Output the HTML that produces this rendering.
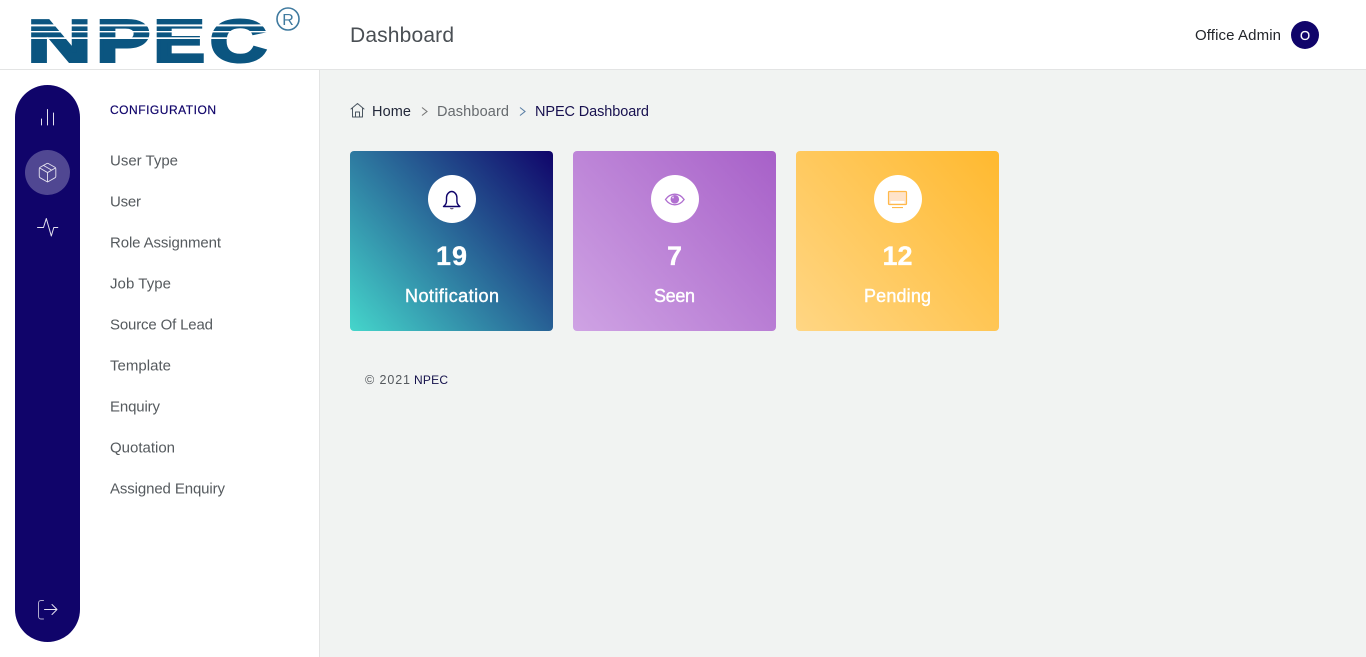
<!DOCTYPE html>
<html lang="en"><head><meta charset="utf-8"><title>NPEC Dashboard</title>
<style>
html,body{margin:0;padding:0;width:1366px;height:657px;overflow:hidden;background:#f1f3f2}
svg{display:block;position:absolute;left:0;top:0}
text{font-family:"Liberation Sans",Arial,sans-serif}
.m{font-size:15px;fill:#555a5e}
.c{font-weight:bold;font-size:27px;fill:#fff;text-anchor:middle;stroke:#fff;stroke-width:.3}
.l{font-size:18px;fill:#fff;stroke:#fff;stroke-width:.4}
.i{fill:none;stroke:#e4e1ef;stroke-width:1;stroke-linecap:round;stroke-linejoin:round}
.g{font-size:59px;font-weight:bold;fill:#0b5580;stroke:#0b5580;stroke-width:3}
</style></head><body>
<svg width="1366" height="657" viewBox="0 0 1366 657" xmlns="http://www.w3.org/2000/svg">
<defs>
<linearGradient id="g1" gradientUnits="userSpaceOnUse" x1="350" y1="331" x2="553" y2="151"><stop offset="0" stop-color="#45d6cb"/><stop offset="1" stop-color="#10046a"/></linearGradient>
<linearGradient id="g2" gradientUnits="userSpaceOnUse" x1="573" y1="331" x2="776" y2="151"><stop offset="0" stop-color="#cfa3e4"/><stop offset="1" stop-color="#a760c8"/></linearGradient>
<linearGradient id="g3" gradientUnits="userSpaceOnUse" x1="796" y1="331" x2="999" y2="151"><stop offset="0" stop-color="#ffd684"/><stop offset="1" stop-color="#ffb92f"/></linearGradient>
</defs>
<!-- panels -->
<rect width="1366" height="657" fill="#f1f3f2"/>
<rect x="0" y="0" width="1366" height="69" fill="#fff"/>
<rect x="0" y="69" width="1366" height="1" fill="#e3e4e4"/>
<rect x="0" y="70" width="319" height="587" fill="#fff"/>
<rect x="319" y="70" width="1" height="587" fill="#e3e4e4"/>
<!-- logo -->
<text class="g" x="27.500" y="61.500" textLength="63.700" lengthAdjust="spacingAndGlyphs">N</text>
<text class="g" x="96.400" y="61.500" textLength="53.700" lengthAdjust="spacingAndGlyphs">P</text>
<text class="g" x="153.500" y="61.500" textLength="51.300" lengthAdjust="spacingAndGlyphs">E</text>
<text class="g" x="210" y="61.500" textLength="56.700" lengthAdjust="spacingAndGlyphs">C</text>
<rect x="28" y="24.400" width="245" height="2" fill="#fff"/>
<rect x="28" y="31" width="245" height="1.400" fill="#fff"/>
<rect x="28" y="37.300" width="245" height="1.700" fill="#fff"/>
<circle cx="288" cy="19" r="11" fill="none" stroke="#3f7a9f" stroke-width="1.600"/>
<text x="288" y="25" font-size="16" fill="#3f7a9f" text-anchor="middle">R</text>
<!-- header -->
<text x="350" y="42" font-size="21" fill="#4a4f54" textLength="104">Dashboard</text>
<text x="1195" y="40" font-size="15" fill="#23262b" textLength="86">Office Admin</text>
<circle cx="1305" cy="35" r="14" fill="#10046a"/>
<text x="1305" y="40" font-size="13" fill="#fff" text-anchor="middle" stroke="#fff" stroke-width=".2">O</text>
<!-- rail -->
<rect x="15" y="85" width="65" height="557" rx="32.500" fill="#10046a"/>
<circle cx="47.500" cy="172.500" r="22.500" fill="#fff" fill-opacity=".27"/>
<path class="i" d="M41.500 119v6M47.500 109.500v15.500M53.500 113v12"/>
<g class="i" transform="translate(36.500 161.500) scale(.92)"><path d="M21 16V8a2 2 0 0 0-1-1.730l-7-4a2 2 0 0 0-2 0l-7 4A2 2 0 0 0 3 8v8a2 2 0 0 0 1 1.730l7 4a2 2 0 0 0 2 0l7-4A2 2 0 0 0 21 16z"/><path d="M16.500 9.400l-9-5.190M3.270 6.960L12 12.010l8.730-5.050M12 22.080V12"/></g>
<path class="i" d="M37.500 227.500h6l2.800-9 5 17.500 2.500-8.500h4"/>
<path class="i" stroke-opacity=".75" d="M43.500 600.500h-2.500a2.500 2.500 0 0 0-2.500 2.500v13.500a2.500 2.500 0 0 0 2.500 2.500h2.500"/>
<path class="i" d="M44.500 609.500h12.500M52 604.500l5 5-5 5"/>
<!-- menu -->
<text x="110" y="114" font-size="12" fill="#10046a" stroke="#10046a" stroke-width=".2" textLength="106">CONFIGURATION</text>
<text class="m" x="110" y="165.500" textLength="68">User Type</text>
<text class="m" x="110" y="206.500" textLength="31">User</text>
<text class="m" x="110" y="247.500" textLength="111">Role Assignment</text>
<text class="m" x="110" y="288.500" textLength="61">Job Type</text>
<text class="m" x="110" y="329.500" textLength="103">Source Of Lead</text>
<text class="m" x="110" y="370.500" textLength="61">Template</text>
<text class="m" x="110" y="411.500" textLength="50">Enquiry</text>
<text class="m" x="110" y="452.500" textLength="65">Quotation</text>
<text class="m" x="110" y="493.500" textLength="115">Assigned Enquiry</text>
<!-- breadcrumb -->
<g fill="none" stroke="#4a5560" stroke-width="1" stroke-linecap="round" stroke-linejoin="round"><path d="M351 109l6.500-5.500 6.500 5.500M352.500 108v9h10v-9M355.500 117v-5h4v5"/></g>
<text x="372" y="116" font-size="14.500" fill="#23283a" textLength="39">Home</text>
<path d="M422 107.500l5 4-5 4" fill="none" stroke="#777" stroke-width="1.100"/>
<text x="437" y="116" font-size="14.500" fill="#666a6e" textLength="72">Dashboard</text>
<path d="M520 107.500l5 4-5 4" fill="none" stroke="#5a7fa5" stroke-width="1.100"/>
<text x="535" y="116" font-size="14.500" fill="#17104f" textLength="114">NPEC Dashboard</text>
<!-- cards -->
<rect x="350" y="151" width="203" height="180" rx="4" fill="url(#g1)"/>
<rect x="573" y="151" width="203" height="180" rx="4" fill="url(#g2)"/>
<rect x="796" y="151" width="203" height="180" rx="4" fill="url(#g3)"/>
<circle cx="452" cy="199" r="24" fill="#fff"/>
<circle cx="675" cy="199" r="24" fill="#fff"/>
<circle cx="898" cy="199" r="24" fill="#fff"/>
<!-- bell -->
<path d="M443.500 206.500c1.800-1.300 3-3 3-5.500v-3.500c0-3 2.400-6 5.200-6s5.200 3 5.200 6v3.500c0 2.500 1.200 4.200 3 5.500z" fill="none" stroke="#10046a" stroke-width="1.400" stroke-linejoin="round"/>
<path d="M450.300 208a1.700 1.700 0 0 0 3 0" fill="#6a5a7a" stroke="#6a5a7a"/>
<!-- eye -->
<path d="M665.500 199.500c2.500-3.500 5.800-5.300 9.300-5.300s6.800 1.800 9.300 5.300c-2.500 3.500-5.800 5.300-9.300 5.300s-6.800-1.800-9.300-5.300z" fill="#fff" stroke="#b06fd0" stroke-width="1.300"/>
<circle cx="674.800" cy="199.300" r="4.300" fill="#b06fd0"/>
<circle cx="673" cy="197.500" r="1" fill="#e6d0f0"/>
<!-- monitor -->
<rect x="888.500" y="191.500" width="18" height="13" rx="1" fill="#ffe3c9" stroke="#ffb94a" stroke-width="1.200"/>
<rect x="890.500" y="201" width="14" height="2.500" fill="#fff"/>
<rect x="892" y="207" width="11" height="1.100" fill="#ffb94a"/>
<text class="c" x="451.500" y="265" textLength="31">19</text>
<text class="c" x="674.500" y="265">7</text>
<text class="c" x="897.500" y="265" textLength="30">12</text>
<text class="l" x="405" y="302" textLength="94">Notification</text>
<text class="l" x="654" y="302" textLength="41">Seen</text>
<text class="l" x="864" y="302" textLength="67">Pending</text>
<!-- footer -->
<text x="365" y="384" font-size="12.500" fill="#55595e" textLength="45">© 2021</text>
<text x="414" y="384" font-size="12" fill="#14104a" textLength="34">NPEC</text>
</svg>
</body></html>
